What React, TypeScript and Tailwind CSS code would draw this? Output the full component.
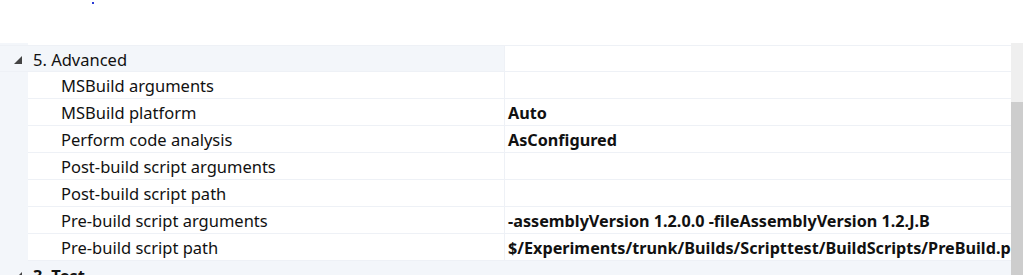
import React from 'react';

const rows: { label: string; value?: string }[] = [
  { label: 'MSBuild arguments' },
  { label: 'MSBuild platform', value: 'Auto' },
  { label: 'Perform code analysis', value: 'AsConfigured' },
  { label: 'Post-build script arguments' },
  { label: 'Post-build script path' },
  { label: 'Pre-build script arguments', value: '-assemblyVersion 1.2.0.0 -fileAssemblyVersion 1.2.J.B' },
  { label: 'Pre-build script path', value: '$/Experiments/trunk/Builds/Scripttest/BuildScripts/PreBuild.ps1' },
];

function Expander() {
  return (
    <svg width="10" height="10" viewBox="0 0 10 10" className="shrink-0">
      <polygon points="9,1 9,9 1,9" fill="#444" />
    </svg>
  );
}

export default function App() {
  return (
    <div
      className="w-[1023px] h-[275px] overflow-hidden bg-white text-[16.5px] text-[#111]"
      style={{ fontFamily: '"Noto Sans", "Open Sans", sans-serif' }}
    >
      {/* clipped content above */}
      <div className="h-[43px] relative">
        <div className="absolute left-[92px] top-[2px] w-[2px] h-[2px] bg-[#2b3bd6]" />
      </div>

      <div className="flex h-[232px]">
        <div className="flex-1 min-w-0 flex flex-col overflow-hidden">
          <div className="flex h-[2px] shrink-0">
            <div className="w-[28px] bg-[#f3f6fa]" />
            <div className="flex-1" />
          </div>

          {/* group header */}
          <div className="flex h-[27px] shrink-0 border-t border-[#eef1f6]">
            <div className="w-[504px] shrink-0 bg-[#f3f6fa] flex items-center pt-[3px] border-b border-[#eef1f6]">
              <div className="w-[33px] flex justify-center pl-[2px]">
                <Expander />
              </div>
              <span>5. Advanced</span>
            </div>
            <div className="flex-1 border-l border-b border-[#eef1f6]" />
          </div>

          {rows.map((r) => (
            <div key={r.label} className="flex h-[27px] shrink-0">
              <div className="w-[28px] shrink-0 bg-[#f3f6fa]" />
              <div className="flex flex-1 min-w-0 border-b border-[#eef1f6]">
                <div className="w-[476px] shrink-0 pl-[33px] pt-[3px] flex items-center whitespace-nowrap">{r.label}</div>
                <div className="flex-1 min-w-0 border-l border-[#eef1f6] pl-[3px] pt-[3px] flex items-center whitespace-nowrap overflow-hidden font-bold text-[16.2px]">
                  {r.value}
                </div>
              </div>
            </div>
          ))}

          <div className="flex h-[27px] shrink-0 bg-[#f3f6fa] items-center pt-[3px]">
            <div className="w-[33px] flex justify-center pl-[2px]">
              <Expander />
            </div>
            <span className="font-bold">3. Test</span>
          </div>
        </div>

        {/* scrollbar */}
        <div className="w-[12px] shrink-0 flex flex-col bg-[#efefef]">
          <div className="h-[59px]" />
          <div className="flex-1 bg-[#cdcdcd]" />
        </div>
      </div>
    </div>
  );
}
